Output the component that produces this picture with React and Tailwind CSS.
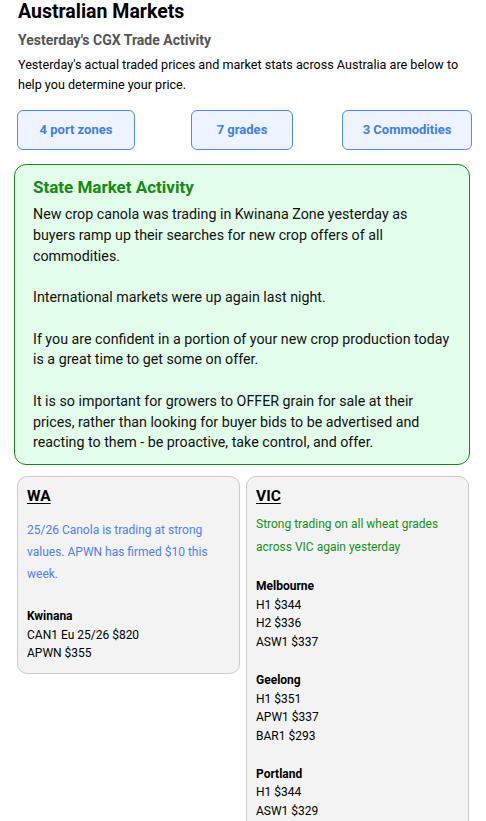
import React from 'react'

const Stat = ({ label, className }) => (
  <button className={`h-10 rounded-md border border-[#4a8bf0] bg-[#edf4ff] text-[13px] font-bold text-[#3f7fe6] ${className}`}>
    {label}
  </button>
)

const Port = ({ name, rows, className }) => (
  <div className={className}>
    <div className="font-bold">{name}</div>
    {rows.map((r) => (
      <div key={r}>{r}</div>
    ))}
  </div>
)

export default function App() {
  return (
    <div className="min-h-screen bg-white font-['Roboto',sans-serif] text-black">
      <div className="px-[18px]">
        <h1 className="text-[19.5px] font-bold leading-[24px]">Australian Markets</h1>
        <h2 className="mt-[6px] text-[14px] font-bold leading-[20px] text-[#555]">Yesterday's CGX Trade Activity</h2>
        <p className="mt-[5px] text-[12.6px] leading-[20px]">
          Yesterday's actual traded prices and market stats across Australia are below to help you determine your price.
        </p>
      </div>

      <div className="mt-[15px] flex">
        <Stat label="4 port zones" className="ml-[17px] w-[118px]" />
        <Stat label="7 grades" className="ml-[56px] w-[102px]" />
        <Stat label="3 Commodities" className="ml-[49px] w-[130px]" />
      </div>

      <div className="mx-[14px] mt-[14px] w-[456px] rounded-xl border border-[#148a14] bg-[#e2fde9] px-[18px] pb-[11px] pt-[11px]">
        <h3 className="text-[17px] font-bold leading-[22px] text-[#158a15]">State Market Activity</h3>
        <div className="mt-[6px] text-[14.25px] leading-[20.75px] text-[#111]">
          <p>New crop canola was trading in Kwinana Zone yesterday as buyers ramp up their searches for new crop offers of all commodities.</p>
          <p className="mt-[20.75px]">International markets were up again last night.</p>
          <p className="mt-[20.75px]">If you are confident in a portion of your new crop production today is a great time to get some on offer.</p>
          <p className="mt-[20.75px]">
            It is so important for growers to OFFER grain for sale at their prices, rather than looking for buyer bids to be advertised and reacting to them - be proactive, take control, and offer.
          </p>
        </div>
      </div>

      <div className="mt-[11px] flex items-start gap-[6px] pl-[17px]">
        <div className="w-[223px] rounded-[10px] border border-[#cacaca] bg-[#f3f3f3] px-[9px] pb-[10px] pt-[8px] text-[12px] leading-[18.7px]">
          <div className="text-[15.5px] font-bold leading-[22px] underline underline-offset-[2px]">WA</div>
          <p className="mt-[12px] leading-[22px] text-[#5080f0]">25/26 Canola is trading at strong values. APWN has firmed $10 this week.</p>
          <Port name="Kwinana" className="mt-[22px]" rows={['CAN1 Eu 25/26 $820', 'APWN $355']} />
        </div>
        <div className="w-[223px] rounded-[10px] border border-[#cacaca] bg-[#f3f3f3] px-[9px] pb-[10px] pt-[8px] text-[12px] leading-[18.7px]">
          <div className="text-[15.5px] font-bold leading-[22px] underline underline-offset-[2px]">VIC</div>
          <p className="mt-[6px] leading-[22.5px] text-[#16901a]">Strong trading on all wheat grades across VIC again yesterday</p>
          <Port name="Melbourne" className="mt-[19px]" rows={['H1 $344', 'H2 $336', 'ASW1 $337']} />
          <Port name="Geelong" className="mt-[19px]" rows={['H1 $351', 'APW1 $337', 'BAR1 $293']} />
          <Port name="Portland" className="mt-[19px]" rows={['H1 $344', 'ASW1 $329']} />
        </div>
      </div>
    </div>
  )
}
